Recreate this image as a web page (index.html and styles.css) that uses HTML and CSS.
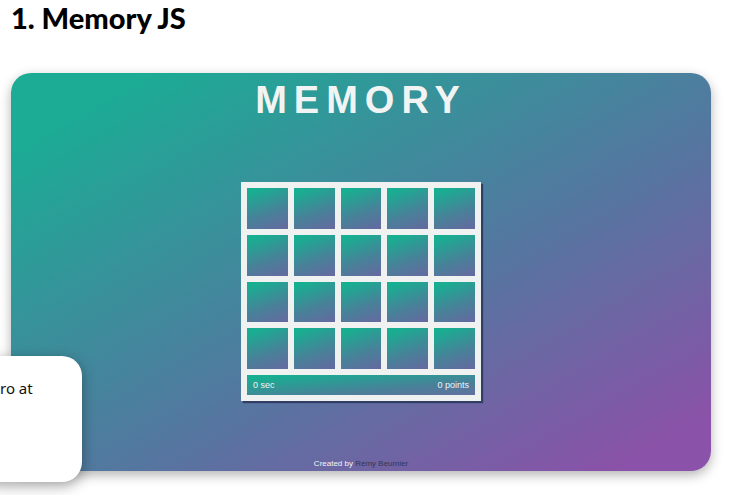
FILE: index.html
```html
<!DOCTYPE html>
<html lang="en">
<head>
<meta charset="utf-8">
<title>Memory JS</title>
<link rel="stylesheet" href="styles.css">
</head>
<body>
<main class="project">
  <h2 class="project-title">1. Memory JS</h2>
  <div class="preview">
    <section class="game">
      <h1 class="game-title">MEMORY</h1>
      <div class="board">
        <button class="tile"></button><button class="tile"></button><button class="tile"></button><button class="tile"></button><button class="tile"></button>
        <button class="tile"></button><button class="tile"></button><button class="tile"></button><button class="tile"></button><button class="tile"></button>
        <button class="tile"></button><button class="tile"></button><button class="tile"></button><button class="tile"></button><button class="tile"></button>
        <button class="tile"></button><button class="tile"></button><button class="tile"></button><button class="tile"></button><button class="tile"></button>
        <div class="status"><span>0 sec</span><span>0 points</span></div>
      </div>
      <footer class="credit">Created by <a href="#">Rémy Beumier</a></footer>
    </section>
    <aside class="note">ro at</aside>
  </div>
</main>
</body>
</html>
```
FILE: styles.css
```css
* {
  box-sizing: border-box;
}

body {
  margin: 0;
  overflow: hidden;
  background: #fff;
  font-family: "Noto Sans", sans-serif;
}

.project {
  padding: 0 19px 24px 11px;
}

.project-title {
  margin: 0 0 37px;
  color: #000;
  font: 900 29px/36px Lato, sans-serif;
}

.preview {
  position: relative;
}

.game {
  display: flex;
  flex-direction: column;
  align-items: center;
  padding: 4px 0 2px;
  border-radius: 20px;
  background: linear-gradient(150deg, #1cab95 10%, #5576a0 58%, #8a52a8 93%);
  box-shadow: 0 4px 12px rgba(0, 0, 0, 0.3);
  color: #f2f4f3;
  font-family: "Liberation Sans", sans-serif;
}

.game-title {
  margin: 0 0 59px;
  font-size: 38px;
  line-height: 46px;
  letter-spacing: 7px;
}

.board {
  display: grid;
  grid-template-columns: repeat(5, 1fr);
  gap: 6px;
  width: 240px;
  padding: 6px;
  background: #f0f1f1;
  box-shadow: 2px 2px 1px #303d65;
}

.tile {
  aspect-ratio: 1;
  padding: 0;
  border: 0;
  background: linear-gradient(160deg, #18ae91 10%, #488199 60%, #6668a0);
}

.status {
  display: flex;
  grid-column: 1 / -1;
  justify-content: space-between;
  padding: 0 6px;
  background: linear-gradient(175deg, #18ae91 10%, #488199 65%, #62709f);
  font-size: 9px;
  line-height: 20px;
}

.credit {
  margin-top: 57px;
  font-size: 8px;
  line-height: 11px;
}

.credit a {
  color: #343656;
  text-decoration: none;
}

.note {
  position: absolute;
  bottom: -11px;
  left: -31px;
  width: 102px;
  height: 126px;
  padding: 20px;
  border-radius: 20px;
  background: #fff;
  box-shadow: 0 4px 14px rgba(0, 0, 0, 0.35);
  color: #111;
  font-size: 15px;
  line-height: 24px;
}
```
